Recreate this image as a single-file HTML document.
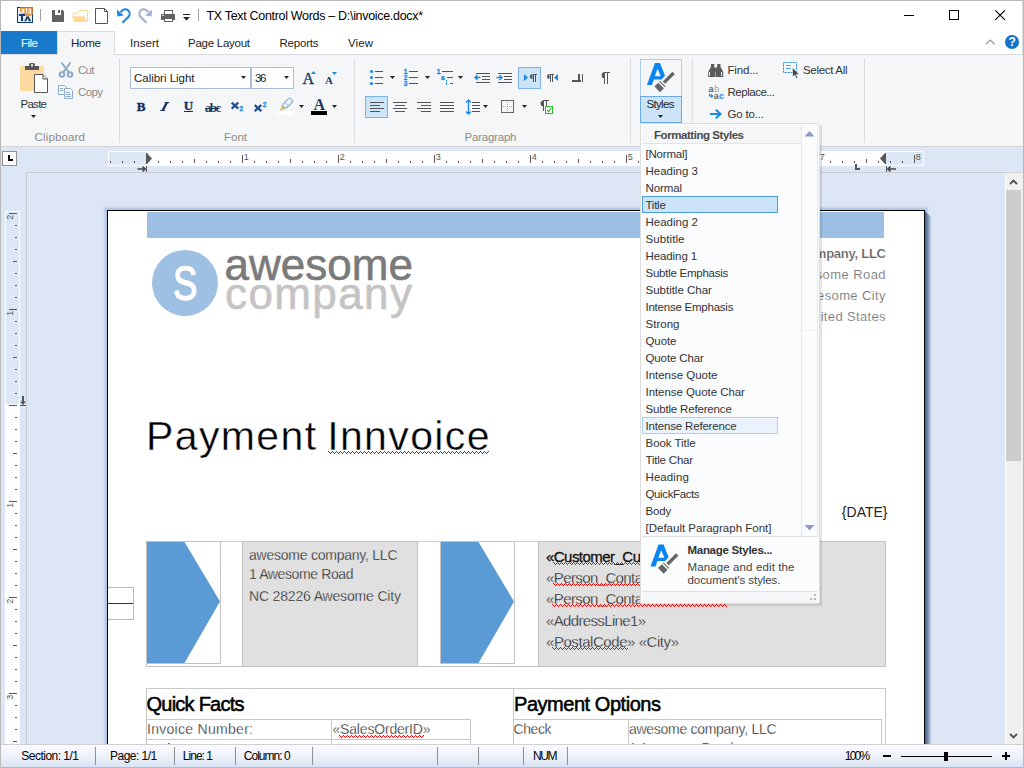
<!DOCTYPE html>
<html><head><meta charset="utf-8"><title>TX Text Control Words</title>
<style>
*{box-sizing:border-box;margin:0;padding:0}
html,body{width:1024px;height:768px;overflow:hidden;background:#fff}
body{font-family:"Liberation Sans",sans-serif;font-size:12px;color:#333;position:relative}
.a{position:absolute}
.t{position:absolute;white-space:nowrap}
svg{position:absolute;left:0;top:0;overflow:visible}
#win{position:absolute;left:0;top:0;width:1024px;height:768px;border:1px solid #b9b9b9;overflow:hidden;box-shadow:inset -1px 0 0 #dcdcdc}
#root{position:absolute;left:-1px;top:-1px;width:1024px;height:768px}
#ribbon{left:1px;top:54px;width:1022px;height:93px;background:#f5f6f7;border-top:1px solid #dadbdc;border-bottom:1px solid #d4d5d6}
#rulerbar{left:1px;top:147px;width:1022px;height:25px;background:#dce6f4}
#docarea{left:1px;top:172px;width:1004px;height:572px;background:#dce6f4;overflow:hidden}
#status{left:1px;top:744px;width:1022px;height:23px;background:linear-gradient(#fafbfd,#eef2f9 50%,#d9e3f3);border-top:1px solid #cfcfcf}
.sep{position:absolute;width:1px;background:#dcdddf}
.ssep{position:absolute;top:747px;width:1px;height:18px;background:#8f8f8f}
.cx{shape-rendering:crispEdges}

</style></head><body>
<div id="win"><div id="root">
<!-- title bar -->
<svg width="1024" height="60" viewBox="0 0 1024 60">
<!-- app icon -->
<rect x="17.500" y="7.500" width="15" height="15" fill="#e9eff8" stroke="#0f3c6e"/>
<path d="M24.300 21.200l2.600-5.500h1.400l2.900 5.500h-2.300l-1.400-3l-1.300 3z" fill="#0f3c6e"/>
<path d="M20 7h13v6.800q-1.500 2.600-5.200 3q-2.600-.5-4.300-2.200q-2.500-1-3.500-3.600z" fill="#eb9a40"/>
<path d="M20 7.500h12.500v6" fill="none" stroke="#b9742c"/>
<path class="cx" d="M19 14h6v2h-2v5h-2v-5h-2z" fill="#0f3c6e"/>
<g stroke="#fff" stroke-width="1.100" fill="none"><path d="M21.800 9l2.400 4M24.200 9l-2.400 4"/><path d="M25.600 10l1-.9v4"/><path d="M28.400 9.300h2v1.700h-1.300h1.300v1.900h-2.100"/></g>
<!-- separators -->
<rect class="cx" x="40" y="9" width="1" height="12" fill="#a0a0a0"/>
<rect class="cx" x="198" y="9" width="1" height="12" fill="#a0a0a0"/>
<!-- save -->
<path class="cx" d="M52 10h10l2 2v10h-12z" fill="#616161"/>
<rect class="cx" x="55" y="10" width="6" height="5" fill="#fff"/>
<rect class="cx" x="58" y="10" width="2" height="3" fill="#616161"/>
<!-- folder -->
<path d="M73.5 20v-7h4.5l2-2.5h7.5v10.5" fill="#fff" stroke="#ffd993" stroke-width="1.2"/>
<path d="M72.200 16.200h12l3.300 5.700h-13.300z" fill="#ffd993"/>
<!-- new doc -->
<path d="M95.5 8.5h9l3 3v12h-12z" fill="#fff" stroke="#555"/>
<path d="M104.5 8.5v3h3" fill="none" stroke="#555"/>
<!-- undo -->
<path d="M122.500 22.800l6-6a4.400 4.400 0 0 0-6.500-6l-1.500 1.600" fill="none" stroke="#1e88e5" stroke-width="2.1"/>
<path d="M116.800 9.600l.6 6.800l6.400-1z" fill="#1e88e5"/>
<!-- redo -->
<path d="M146.500 22.800l-6-6a4.400 4.400 0 0 1 6.500-6l1.500 1.600" fill="none" stroke="#9db3d0" stroke-width="2.1"/>
<path d="M152.200 9.600l-.6 6.800l-6.400-1z" fill="#9db3d0"/>
<!-- print -->
<rect class="cx" x="161" y="14" width="14" height="6" fill="#616161"/>
<rect class="cx" x="164.5" y="10.5" width="8" height="4" fill="#fff" stroke="#616161"/>
<rect class="cx" x="164.5" y="18.5" width="8" height="3" fill="#fff" stroke="#616161"/>
<rect class="cx" x="162" y="15" width="2" height="1" fill="#ddd"/>
<!-- qat dropdown -->
<rect class="cx" x="183" y="14" width="7" height="1" fill="#222"/>
<path d="M183 17h7l-3.5 3.5z" fill="#222"/>
<!-- window buttons -->
<rect class="cx" x="904" y="15" width="10" height="1" fill="#000"/>
<rect class="cx" x="949.5" y="10.5" width="9" height="9" fill="none" stroke="#000"/>
<path d="M995.3 10.3l9.6 9.6M1004.9 10.3l-9.6 9.6" stroke="#000" stroke-width="1.1" fill="none"/>
<!-- collapse + help -->
<path d="M986 44.3l4.3-4.2l4.3 4.2" stroke="#9a9a9a" stroke-width="1.3" fill="none"/>
<circle cx="1012" cy="42" r="7" fill="#1271c9"/>
<text x="1008.6" y="46.3" font-family="Liberation Sans" font-weight="bold" font-size="12" fill="#fff">?</text>
</svg>
<div class="t" style="top:10px;font-size:12.5px;line-height:12.5px;color:#000;left:206.5px;letter-spacing:-0.315px;">TX Text Control Words – D:\invoice.docx*</div>
<div class="a" style="left:1px;top:31px;width:56px;height:23px;background:#1979ca"></div>
<div class="t" style="top:38px;font-size:11.5px;line-height:11.5px;color:#fff;left:21px;letter-spacing:-0.510px;">File</div>
<div class="a" id="ribbon"></div>
<div class="a" style="left:57px;top:31px;width:58px;height:24px;background:#f5f6f7;border:1px solid #dadbdc;border-bottom:none"></div>
<div class="t" style="top:38px;font-size:11.5px;line-height:11.5px;color:#222;left:71px;letter-spacing:-0.229px;">Home</div>
<div class="t" style="top:38px;font-size:11.5px;line-height:11.5px;color:#222;left:130px;letter-spacing:0.047px;">Insert</div>
<div class="t" style="top:38px;font-size:11.5px;line-height:11.5px;color:#222;left:188px;letter-spacing:-0.259px;">Page Layout</div>
<div class="t" style="top:38px;font-size:11.5px;line-height:11.5px;color:#222;left:279.5px;letter-spacing:-0.214px;">Reports</div>
<div class="t" style="top:38px;font-size:11.5px;line-height:11.5px;color:#222;left:348px;letter-spacing:0.094px;">View</div>
<div class="sep" style="left:119px;top:58px;height:85px"></div>
<div class="sep" style="left:354px;top:58px;height:85px"></div>
<div class="sep" style="left:630px;top:58px;height:85px"></div>
<div class="sep" style="left:692px;top:58px;height:85px"></div>
<div class="sep" style="left:864px;top:58px;height:85px"></div>
<div class="t" style="top:132px;font-size:11.5px;line-height:11.5px;color:#8c8c8c;left:34.5px;letter-spacing:0.158px;">Clipboard</div>
<div class="t" style="top:132px;font-size:11.5px;line-height:11.5px;color:#8c8c8c;left:224px;letter-spacing:-0.005px;">Font</div>
<div class="t" style="top:132px;font-size:11.5px;line-height:11.5px;color:#8c8c8c;left:464.5px;letter-spacing:-0.215px;">Paragraph</div>
<div class="t" style="top:99px;font-size:11.5px;line-height:11.5px;color:#333;left:20.5px;letter-spacing:-0.730px;">Paste</div>
<div class="t" style="top:65px;font-size:11.5px;line-height:11.5px;color:#8c8c8c;left:78px;letter-spacing:-0.703px;">Cut</div>
<div class="t" style="top:87px;font-size:11.5px;line-height:11.5px;color:#8c8c8c;left:78px;letter-spacing:-0.620px;">Copy</div>
<div class="a" style="left:130px;top:67px;width:121px;height:22px;background:#fff;border:1px solid #abbdd8"></div>
<div class="a" style="left:251px;top:67px;width:43px;height:22px;background:#fff;border:1px solid #abbdd8"></div>
<div class="t" style="top:73px;font-size:11.5px;line-height:11.5px;color:#222;left:134px;letter-spacing:-0.020px;">Calibri Light</div>
<div class="t" style="top:73px;font-size:11.5px;line-height:11.5px;color:#222;left:255px;letter-spacing:-1.297px;">36</div>
<div class="t" style="top:100px;font-size:13px;line-height:13px;color:#14305a;left:136.8px;font-weight:bold;font-family:'Liberation Serif',serif;-webkit-text-stroke:.45px #14305a;">B</div>
<svg width="1024" height="150" viewBox="0 0 1024 150"><path d="M160.300 110.400h4.600M164.600 102.600h4.600" stroke="#14305a" stroke-width="1" fill="none"/><path d="M162.700 110.600l4.200-8.200" stroke="#14305a" stroke-width="2.300" fill="none"/></svg>
<div class="t" style="top:99px;font-size:13px;line-height:13px;color:#14305a;left:183.8px;font-weight:bold;font-family:'Liberation Serif',serif;-webkit-text-stroke:.3px #14305a;">U</div>
<div class="a" style="left:184px;top:111px;width:9px;height:1px;background:#14305a"></div>
<div class="t" style="top:101px;font-size:13px;line-height:13px;color:#1e3a5f;left:205px;font-weight:bold;font-family:'Liberation Serif',serif;letter-spacing:-1.650px;text-decoration:line-through;text-decoration-thickness:1px;">abc</div>
<div class="t" style="top:71px;font-size:16px;line-height:16px;color:#1e3a5f;left:302.4px;font-family:'Liberation Serif',serif;-webkit-text-stroke:.35px #1e3a5f;">A</div>
<div class="t" style="top:75px;font-size:11px;line-height:11px;color:#1e3a5f;left:325px;font-weight:bold;font-family:'Liberation Serif',serif;">A</div>
<div class="t" style="top:97px;font-size:16px;line-height:16px;color:#1e3a5f;left:313.5px;font-weight:bold;font-family:'Liberation Serif',serif;">A</div>
<div class="a" style="left:518px;top:67px;width:23px;height:22px;background:#cce4f7;border:1px solid #7db3ea"></div>
<div class="a" style="left:365px;top:96px;width:23px;height:22px;background:#cce4f7;border:1px solid #7db3ea"></div>
<div class="a" style="left:640px;top:59px;width:42px;height:38px;border:1px solid #a9cdf2;border-bottom:none"></div>
<div class="a" style="left:640px;top:96px;width:42px;height:27px;background:#cce4f7;border:1px solid #6ca9e8"></div>
<div class="t" style="top:99px;font-size:11.5px;line-height:11.5px;color:#222;left:646.5px;letter-spacing:-0.666px;">Styles</div>
<div class="t" style="top:65px;font-size:11.5px;line-height:11.5px;color:#333;left:727.5px;letter-spacing:-0.161px;">Find...</div>
<div class="t" style="top:87px;font-size:11.5px;line-height:11.5px;color:#333;left:727.5px;letter-spacing:-0.476px;">Replace...</div>
<div class="t" style="top:109px;font-size:11.5px;line-height:11.5px;color:#333;left:727.5px;letter-spacing:-0.174px;">Go to...</div>
<div class="t" style="top:65px;font-size:11.5px;line-height:11.5px;color:#333;left:803px;letter-spacing:-0.312px;">Select All</div>
<svg width="1024" height="150" viewBox="0 0 1024 150"><rect x="20" y="66" width="24" height="25" rx="1.200" fill="#fcd9a0"/><rect class="cx" x="25" y="66" width="14" height="4" fill="#595959"/><path d="M29 66v-1.500q0-1.500 1.500-1.500h3q1.500 0 1.500 1.500v1.500z" fill="#595959"/><rect x="31" y="64.300" width="2" height="2" fill="#f5f6f7"/><path d="M34.500 74.500h8.500l4.500 4.500v13.500h-13z" fill="#fff" stroke="#595959"/><path d="M43 74.500v4.500h4.500" fill="#e4e4e4" stroke="#595959"/><path d="M31 115h5l-2.5 3z" fill="#222"/><g stroke="#8fa9c8" fill="none" stroke-width="2"><path d="M61.500 62.500l7.500 10M70.500 62.500l-7.500 10"/><circle cx="62" cy="74.500" r="2.300"/><circle cx="70" cy="74.500" r="2.300"/></g><g stroke="#8fa9c8" fill="#f5f6f7"><path d="M58.500 85.500h6l2 2v7h-8z"/><path d="M64.500 88.500h6l2 2v8h-8z"/></g><rect class="cx" x="66" y="92" width="4" height="1" fill="#8fa9c8"/><rect class="cx" x="66" y="94" width="5" height="1" fill="#8fa9c8"/><rect class="cx" x="66" y="96" width="5" height="1" fill="#8fa9c8"/><rect class="cx" x="60" y="88" width="3" height="1" fill="#8fa9c8"/><rect class="cx" x="60" y="90" width="3" height="1" fill="#8fa9c8"/><path d="M241 76h5l-2.5 3z" fill="#222"/><path d="M284 76h5l-2.5 3z" fill="#222"/><path d="M311 74l2.500-3l2.500 3z" fill="#1e88e5"/><path d="M332 72h5l-2.500 3z" fill="#1e88e5"/><g stroke="#1e4f8f" stroke-width="2.300" fill="none"><path d="M231.700 102.600l6.600 6M238.300 102.600l-6.600 6"/><path d="M254.700 105l6.600 6.200M261.300 105l-6.600 6.200"/></g><text x="239.600" y="111" font-family="Liberation Sans" font-weight="bold" font-size="6.500" fill="#1e88e5" stroke="#1e88e5" stroke-width=".3">2</text><text x="262.700" y="106.500" font-family="Liberation Sans" font-weight="bold" font-size="6.500" fill="#1e88e5" stroke="#1e88e5" stroke-width=".3">2</text><g transform="translate(290.500 100.300) rotate(45)"><rect x="-2.600" y="-1.200" width="5.200" height="10.500" rx="1.600" fill="#eef3fb" stroke="#7f9fcc" stroke-width="1"/><path d="M-2.200 5.500h4.400" stroke="#7f9fcc" stroke-width=".8"/><path d="M-1.800 10h3.600l-.6 2.200l-1.200 2l-1.200-2z" fill="#e8c860" stroke="#b9a050" stroke-width=".4"/></g><rect class="cx" x="278" y="111" width="16" height="4" fill="#fff"/><path d="M299 105h5l-2.5 3z" fill="#222"/><rect class="cx" x="311" y="111" width="16" height="4" fill="#000"/><path d="M332 105h5l-2.5 3z" fill="#222"/><circle cx="371.500" cy="71.5" r="1.600" fill="#1e88e5"/><rect class="cx" x="375" y="71" width="8" height="1" fill="#555"/><circle cx="371.500" cy="77.5" r="1.600" fill="#1e88e5"/><rect class="cx" x="375" y="77" width="8" height="1" fill="#555"/><circle cx="371.500" cy="83.5" r="1.600" fill="#1e88e5"/><rect class="cx" x="375" y="83" width="8" height="1" fill="#555"/><path d="M390 76h5l-2.5 3z" fill="#222"/><text x="403.700" y="73.6" font-family="Liberation Sans" font-weight="bold" font-size="6.500" fill="#1e88e5" stroke="#1e88e5" stroke-width=".3">1</text><rect class="cx" x="409" y="71" width="9" height="1" fill="#555"/><text x="403.700" y="79.6" font-family="Liberation Sans" font-weight="bold" font-size="6.500" fill="#1e88e5" stroke="#1e88e5" stroke-width=".3">2</text><rect class="cx" x="409" y="77" width="9" height="1" fill="#555"/><text x="403.700" y="85.6" font-family="Liberation Sans" font-weight="bold" font-size="6.500" fill="#1e88e5" stroke="#1e88e5" stroke-width=".3">3</text><rect class="cx" x="409" y="83" width="9" height="1" fill="#555"/><path d="M425 76h5l-2.5 3z" fill="#222"/><text x="436.700" y="73.600" font-family="Liberation Sans" font-weight="bold" font-size="6.500" fill="#1e88e5" stroke="#1e88e5" stroke-width=".3">1</text><rect class="cx" x="442" y="71" width="11" height="1" fill="#555"/><text x="441" y="79.600" font-family="Liberation Sans" font-weight="bold" font-size="6.500" fill="#1e88e5" stroke="#1e88e5" stroke-width=".3">a</text><rect class="cx" x="447" y="77" width="6" height="1" fill="#555"/><rect class="cx" x="446" y="82" width="1" height="3" fill="#1e88e5"/><rect class="cx" x="446" y="80" width="1" height="1" fill="#1e88e5"/><rect class="cx" x="450" y="83" width="3" height="1" fill="#555"/><path d="M458 76h5l-2.5 3z" fill="#222"/><rect class="cx" x="476" y="73" width="14" height="1" fill="#555"/><rect class="cx" x="482" y="76" width="8" height="1" fill="#555"/><rect class="cx" x="482" y="79" width="8" height="1" fill="#555"/><rect class="cx" x="476" y="82" width="14" height="1" fill="#555"/><path d="M480.500 77.500h-5.500M477.500 75l-2.500 2.500l2.500 2.500" stroke="#1e88e5" stroke-width="1.400" fill="none"/><rect class="cx" x="498" y="73" width="14" height="1" fill="#555"/><rect class="cx" x="504" y="76" width="8" height="1" fill="#555"/><rect class="cx" x="504" y="79" width="8" height="1" fill="#555"/><rect class="cx" x="498" y="82" width="14" height="1" fill="#555"/><path d="M496.500 77.500h5.500M499.500 75l2.500 2.500l-2.500 2.500" stroke="#1e88e5" stroke-width="1.400" fill="none"/><path d="M524 74v7l4-3.500z" fill="#1e88e5"/><path d="M532.5 74a2.500 2.500 0 0 0 0 5z" fill="#555"/><rect class="cx" x="532.5" y="74" width="1" height="8" fill="#555"/><rect class="cx" x="534.5" y="74" width="1" height="8" fill="#555"/><rect class="cx" x="532.5" y="74" width="4.500" height="1" fill="#555"/><path d="M549.5 74a2.500 2.500 0 0 0 0 5z" fill="#555"/><rect class="cx" x="549.5" y="74" width="1" height="8" fill="#555"/><rect class="cx" x="551.5" y="74" width="1" height="8" fill="#555"/><rect class="cx" x="549.5" y="74" width="4.500" height="1" fill="#555"/><path d="M558 74v7l-4-3.500z" fill="#1e88e5"/><rect class="cx" x="572" y="80" width="9" height="2" fill="#555"/><rect class="cx" x="578" y="74" width="2" height="8" fill="#555"/><rect class="cx" x="582" y="74" width="1" height="8" fill="#555"/><path d="M605 72a3.300 3.300 0 0 0 0 6.600z" fill="#555"/><rect class="cx" x="604" y="72" width="1" height="12" fill="#555"/><rect class="cx" x="607" y="72" width="1" height="12" fill="#555"/><rect class="cx" x="604" y="72" width="6" height="1.200" fill="#555"/><rect class="cx" x="370" y="102" width="14" height="1" fill="#555"/><rect class="cx" x="370" y="105" width="10" height="1" fill="#555"/><rect class="cx" x="370" y="108" width="14" height="1" fill="#555"/><rect class="cx" x="370" y="111" width="10" height="1" fill="#555"/><rect class="cx" x="393" y="102" width="14" height="1" fill="#555"/><rect class="cx" x="395" y="105" width="10" height="1" fill="#555"/><rect class="cx" x="393" y="108" width="14" height="1" fill="#555"/><rect class="cx" x="395" y="111" width="10" height="1" fill="#555"/><rect class="cx" x="417" y="102" width="14" height="1" fill="#555"/><rect class="cx" x="421" y="105" width="10" height="1" fill="#555"/><rect class="cx" x="417" y="108" width="14" height="1" fill="#555"/><rect class="cx" x="421" y="111" width="10" height="1" fill="#555"/><rect class="cx" x="440" y="102" width="14" height="1" fill="#555"/><rect class="cx" x="440" y="105" width="14" height="1" fill="#555"/><rect class="cx" x="440" y="108" width="14" height="1" fill="#555"/><rect class="cx" x="440" y="111" width="14" height="1" fill="#555"/><rect class="cx" x="472" y="102" width="8" height="1" fill="#555"/><rect class="cx" x="472" y="105" width="8" height="1" fill="#555"/><rect class="cx" x="472" y="108" width="8" height="1" fill="#555"/><rect class="cx" x="472" y="111" width="8" height="1" fill="#555"/><path d="M468.500 100v14M466 102.500l2.500-2.500l2.500 2.500M466 111.500l2.500 2.500l2.500-2.500" stroke="#1e88e5" stroke-width="1.400" fill="none"/><path d="M483 105h5l-2.5 3z" fill="#222"/><rect x="501.500" y="100.500" width="12" height="12" fill="#f5f6f7" stroke="#666"/><path d="M507.500 102v10M503 106.500h10" stroke="#aaa" stroke-width="1" stroke-dasharray="1 1" fill="none"/><path d="M522 105h5l-2.5 3z" fill="#222"/><path d="M543.500 100.500a3 3 0 0 0 0 6z" fill="#555"/><rect class="cx" x="543" y="100" width="1" height="11" fill="#555"/><rect class="cx" x="546" y="100" width="1" height="6" fill="#555"/><rect class="cx" x="543" y="100" width="6" height="1.200" fill="#555"/><rect x="545.500" y="106.500" width="7" height="7" fill="#fff" stroke="#2eb82e"/><path d="M547 110l1.700 1.800l2.600-3.800" stroke="#2eb82e" stroke-width="1.200" fill="none"/><path d="M646.900 85L655 63h5l5 12.700l-3.500 3.900h-7.700l-1.900 5.400zM657.600 68.700l-2.800 7.500h5.950z" fill="#0a84f0" fill-rule="evenodd"/><g transform="translate(673.600 73) rotate(45)" fill="#666"><rect x="-1.700" y="0" width="3.400" height="13.600"/><rect x="-4" y="15.200" width="8" height="1.100"/><rect x="-4" y="17.700" width="8" height="5.400"/></g><path d="M658 115h5l-2.5 3z" fill="#222"/><g fill="#5a5a5a"><rect x="711" y="64" width="3.300" height="4"/><rect x="717.200" y="64" width="3.300" height="4"/><path d="M710.500 67.600h4.200l.8 3.400v6h-7.300v-5z"/><path d="M716.800 67.600h4.200l2.200 4.400v5h-7.300v-6z"/><rect x="714.500" y="67.600" width="2.500" height="4"/></g><rect class="cx" x="709" y="72" width="1" height="4" fill="#e8e8e8"/><rect class="cx" x="721" y="72" width="1" height="4" fill="#e8e8e8"/><text x="708.500" y="92" font-family="Liberation Sans" font-weight="bold" font-size="9" fill="#666">a</text><text x="714.200" y="92" font-family="Liberation Sans" font-size="9" fill="#9a9a9a">b</text><text x="713.800" y="98.500" font-family="Liberation Sans" font-weight="bold" font-size="9" fill="#666">a</text><text x="718.900" y="98.500" font-family="Liberation Sans" font-weight="bold" font-size="9" fill="#1e88e5">c</text><path d="M709.500 93.500v2.500h3M711 94.300l1.700 1.700l-1.700 1.700" stroke="#1e88e5" stroke-width="1.200" fill="none"/><path d="M710 114h10M715.800 109.800l4.700 4.200l-4.700 4.200" stroke="#1e88e5" stroke-width="2.100" fill="none"/><rect x="783.500" y="62.500" width="13" height="10" fill="none" stroke="#1e88e5" stroke-dasharray="2 1"/><rect class="cx" x="786" y="65" width="5" height="1" fill="#5aa6ec"/><rect class="cx" x="786" y="68" width="5" height="1" fill="#5aa6ec"/><path d="M792.500 67.500v9.500l2.200-2l1.600 3.500l1.500-.7l-1.600-3.400h3z" fill="#444" stroke="#f5f6f7" stroke-width=".6"/></svg>
<div class="a" id="rulerbar"></div>
<div class="a" style="left:2px;top:151px;width:15px;height:15px;background:#fff;border:1px solid #8f8f8f"></div>
<svg width="1024" height="175" viewBox="0 0 1024 175"><path class="cx" d="M8 155h2v4h3v2h-5z" fill="#000"/><rect class="cx" x="108" y="151" width="816" height="15" fill="#fff"/><rect class="cx" x="109" y="152" width="38" height="13" fill="#dce6f4"/><rect class="cx" x="886" y="152" width="37" height="13" fill="#dce6f4"/><rect class="cx" x="110" y="161" width="1" height="2" fill="#555"/><rect class="cx" x="122" y="161" width="1" height="2" fill="#555"/><rect class="cx" x="134" y="161" width="1" height="2" fill="#555"/><rect class="cx" x="158" y="161" width="1" height="2" fill="#555"/><rect class="cx" x="170" y="161" width="1" height="2" fill="#555"/><rect class="cx" x="182" y="161" width="1" height="2" fill="#555"/><rect class="cx" x="194" y="159" width="1" height="4" fill="#555"/><rect class="cx" x="206" y="161" width="1" height="2" fill="#555"/><rect class="cx" x="218" y="161" width="1" height="2" fill="#555"/><rect class="cx" x="230" y="161" width="1" height="2" fill="#555"/><rect class="cx" x="242" y="155" width="1" height="8" fill="#555"/><text x="243.8" y="159.600" font-family="Liberation Sans" font-size="9" fill="#555">1</text><rect class="cx" x="254" y="161" width="1" height="2" fill="#555"/><rect class="cx" x="266" y="161" width="1" height="2" fill="#555"/><rect class="cx" x="278" y="161" width="1" height="2" fill="#555"/><rect class="cx" x="290" y="159" width="1" height="4" fill="#555"/><rect class="cx" x="302" y="161" width="1" height="2" fill="#555"/><rect class="cx" x="314" y="161" width="1" height="2" fill="#555"/><rect class="cx" x="326" y="161" width="1" height="2" fill="#555"/><rect class="cx" x="338" y="155" width="1" height="8" fill="#555"/><text x="339.8" y="159.600" font-family="Liberation Sans" font-size="9" fill="#555">2</text><rect class="cx" x="350" y="161" width="1" height="2" fill="#555"/><rect class="cx" x="362" y="161" width="1" height="2" fill="#555"/><rect class="cx" x="374" y="161" width="1" height="2" fill="#555"/><rect class="cx" x="386" y="159" width="1" height="4" fill="#555"/><rect class="cx" x="398" y="161" width="1" height="2" fill="#555"/><rect class="cx" x="410" y="161" width="1" height="2" fill="#555"/><rect class="cx" x="422" y="161" width="1" height="2" fill="#555"/><rect class="cx" x="434" y="155" width="1" height="8" fill="#555"/><text x="435.8" y="159.600" font-family="Liberation Sans" font-size="9" fill="#555">3</text><rect class="cx" x="446" y="161" width="1" height="2" fill="#555"/><rect class="cx" x="458" y="161" width="1" height="2" fill="#555"/><rect class="cx" x="470" y="161" width="1" height="2" fill="#555"/><rect class="cx" x="482" y="159" width="1" height="4" fill="#555"/><rect class="cx" x="494" y="161" width="1" height="2" fill="#555"/><rect class="cx" x="506" y="161" width="1" height="2" fill="#555"/><rect class="cx" x="518" y="161" width="1" height="2" fill="#555"/><rect class="cx" x="530" y="155" width="1" height="8" fill="#555"/><text x="531.8" y="159.600" font-family="Liberation Sans" font-size="9" fill="#555">4</text><rect class="cx" x="542" y="161" width="1" height="2" fill="#555"/><rect class="cx" x="554" y="161" width="1" height="2" fill="#555"/><rect class="cx" x="566" y="161" width="1" height="2" fill="#555"/><rect class="cx" x="578" y="159" width="1" height="4" fill="#555"/><rect class="cx" x="590" y="161" width="1" height="2" fill="#555"/><rect class="cx" x="602" y="161" width="1" height="2" fill="#555"/><rect class="cx" x="614" y="161" width="1" height="2" fill="#555"/><rect class="cx" x="626" y="155" width="1" height="8" fill="#555"/><text x="627.8" y="159.600" font-family="Liberation Sans" font-size="9" fill="#555">5</text><rect class="cx" x="638" y="161" width="1" height="2" fill="#555"/><rect class="cx" x="650" y="161" width="1" height="2" fill="#555"/><rect class="cx" x="662" y="161" width="1" height="2" fill="#555"/><rect class="cx" x="674" y="159" width="1" height="4" fill="#555"/><rect class="cx" x="686" y="161" width="1" height="2" fill="#555"/><rect class="cx" x="698" y="161" width="1" height="2" fill="#555"/><rect class="cx" x="710" y="161" width="1" height="2" fill="#555"/><rect class="cx" x="722" y="155" width="1" height="8" fill="#555"/><text x="723.8" y="159.600" font-family="Liberation Sans" font-size="9" fill="#555">6</text><rect class="cx" x="734" y="161" width="1" height="2" fill="#555"/><rect class="cx" x="746" y="161" width="1" height="2" fill="#555"/><rect class="cx" x="758" y="161" width="1" height="2" fill="#555"/><rect class="cx" x="770" y="159" width="1" height="4" fill="#555"/><rect class="cx" x="782" y="161" width="1" height="2" fill="#555"/><rect class="cx" x="794" y="161" width="1" height="2" fill="#555"/><rect class="cx" x="806" y="161" width="1" height="2" fill="#555"/><rect class="cx" x="818" y="155" width="1" height="8" fill="#555"/><text x="819.8" y="159.600" font-family="Liberation Sans" font-size="9" fill="#555">7</text><rect class="cx" x="830" y="161" width="1" height="2" fill="#555"/><rect class="cx" x="842" y="161" width="1" height="2" fill="#555"/><rect class="cx" x="854" y="161" width="1" height="2" fill="#555"/><rect class="cx" x="866" y="159" width="1" height="4" fill="#555"/><rect class="cx" x="878" y="161" width="1" height="2" fill="#555"/><rect class="cx" x="890" y="161" width="1" height="2" fill="#555"/><rect class="cx" x="902" y="161" width="1" height="2" fill="#555"/><rect class="cx" x="914" y="155" width="1" height="8" fill="#555"/><text x="915.8" y="159.600" font-family="Liberation Sans" font-size="9" fill="#555">8</text><path d="M146 153h1l5 5.500l-5 5.500h-1z" fill="#555"/><path d="M147 153.500l4.300 4.700" stroke="#999" stroke-width=".8" fill="none"/><path d="M137.500 169h8M142.500 166.500l2.700 2.500l-2.700 2.500" stroke="#444" stroke-width="1.600" fill="none"/><rect class="cx" x="146" y="166" width="1" height="6" fill="#555"/><path d="M886 153h-1l-5 5.500l5 5.500h1z" fill="#555"/><path d="M896 169h-8M890.500 166.500l-2.700 2.500l2.700 2.500" stroke="#444" stroke-width="1.600" fill="none"/><rect class="cx" x="886" y="166" width="1" height="6" fill="#555"/><path class="cx" d="M855 164h2v4h3v2h-5z" fill="#555"/></svg>
<div class="a" id="docarea"></div>
<div class="a" style="left:1px;top:172px;width:1004px;height:572px;overflow:hidden"><div class="a" style="left:-1px;top:-172px;width:1024px;height:768px">
<div class="a" style="left:26px;top:172px;width:979px;height:1px;background:#c9cdd3"></div>
<div class="a" style="left:26px;top:172px;width:1px;height:572px;background:#c9cdd3"></div>
<svg width="30" height="768" viewBox="0 0 30 768"><rect class="cx" x="5" y="211" width="15" height="540" fill="#fff"/><rect class="cx" x="6" y="212" width="13" height="192" fill="#dce6f4"/><rect class="cx" x="9" y="213" width="8" height="1" fill="#555"/><text transform="translate(13.200 214.8) rotate(-90)" text-anchor="end" font-family="Liberation Sans" font-size="9" fill="#555">2</text><rect class="cx" x="15" y="225" width="2" height="1" fill="#555"/><rect class="cx" x="15" y="237" width="2" height="1" fill="#555"/><rect class="cx" x="15" y="249" width="2" height="1" fill="#555"/><rect class="cx" x="13" y="261" width="4" height="1" fill="#555"/><rect class="cx" x="15" y="273" width="2" height="1" fill="#555"/><rect class="cx" x="15" y="285" width="2" height="1" fill="#555"/><rect class="cx" x="15" y="297" width="2" height="1" fill="#555"/><rect class="cx" x="9" y="309" width="8" height="1" fill="#555"/><text transform="translate(13.200 310.8) rotate(-90)" text-anchor="end" font-family="Liberation Sans" font-size="9" fill="#555">1</text><rect class="cx" x="15" y="321" width="2" height="1" fill="#555"/><rect class="cx" x="15" y="333" width="2" height="1" fill="#555"/><rect class="cx" x="15" y="345" width="2" height="1" fill="#555"/><rect class="cx" x="13" y="357" width="4" height="1" fill="#555"/><rect class="cx" x="15" y="369" width="2" height="1" fill="#555"/><rect class="cx" x="15" y="381" width="2" height="1" fill="#555"/><rect class="cx" x="15" y="393" width="2" height="1" fill="#555"/><rect class="cx" x="15" y="417" width="2" height="1" fill="#555"/><rect class="cx" x="15" y="429" width="2" height="1" fill="#555"/><rect class="cx" x="15" y="441" width="2" height="1" fill="#555"/><rect class="cx" x="13" y="453" width="4" height="1" fill="#555"/><rect class="cx" x="15" y="465" width="2" height="1" fill="#555"/><rect class="cx" x="15" y="477" width="2" height="1" fill="#555"/><rect class="cx" x="15" y="489" width="2" height="1" fill="#555"/><rect class="cx" x="9" y="501" width="8" height="1" fill="#555"/><text transform="translate(13.200 502.8) rotate(-90)" text-anchor="end" font-family="Liberation Sans" font-size="9" fill="#555">1</text><rect class="cx" x="15" y="513" width="2" height="1" fill="#555"/><rect class="cx" x="15" y="525" width="2" height="1" fill="#555"/><rect class="cx" x="15" y="537" width="2" height="1" fill="#555"/><rect class="cx" x="13" y="549" width="4" height="1" fill="#555"/><rect class="cx" x="15" y="561" width="2" height="1" fill="#555"/><rect class="cx" x="15" y="573" width="2" height="1" fill="#555"/><rect class="cx" x="15" y="585" width="2" height="1" fill="#555"/><rect class="cx" x="9" y="597" width="8" height="1" fill="#555"/><text transform="translate(13.200 598.8) rotate(-90)" text-anchor="end" font-family="Liberation Sans" font-size="9" fill="#555">2</text><rect class="cx" x="15" y="609" width="2" height="1" fill="#555"/><rect class="cx" x="15" y="621" width="2" height="1" fill="#555"/><rect class="cx" x="15" y="633" width="2" height="1" fill="#555"/><rect class="cx" x="13" y="645" width="4" height="1" fill="#555"/><rect class="cx" x="15" y="657" width="2" height="1" fill="#555"/><rect class="cx" x="15" y="669" width="2" height="1" fill="#555"/><rect class="cx" x="15" y="681" width="2" height="1" fill="#555"/><rect class="cx" x="9" y="693" width="8" height="1" fill="#555"/><text transform="translate(13.200 694.8) rotate(-90)" text-anchor="end" font-family="Liberation Sans" font-size="9" fill="#555">3</text><rect class="cx" x="15" y="705" width="2" height="1" fill="#555"/><rect class="cx" x="15" y="717" width="2" height="1" fill="#555"/><rect class="cx" x="15" y="729" width="2" height="1" fill="#555"/><rect class="cx" x="13" y="741" width="4" height="1" fill="#555"/><rect class="cx" x="15" y="753" width="2" height="1" fill="#555"/><rect class="cx" x="9" y="405" width="8" height="1" fill="#555"/><rect class="cx" x="22" y="396" width="2" height="8" fill="#555"/><path d="M20 401.500h6l-3 3.500z" fill="#555"/><rect class="cx" x="20" y="405" width="6" height="1" fill="#555"/></svg>
<div class="a" style="left:107px;top:210px;width:818px;height:600px;background:#fff;border:1px solid #000;box-shadow:0 0 0 1px #afc4e2,0 0 0 2px #b8cbe5,0 0 0 3px #c7d6eb,0 0 0 4px #d5e0f0"></div>
<div class="a" style="left:925px;top:211px;width:7px;height:600px;background:linear-gradient(to right,#4a6488,#7088aa 40%,rgba(150,170,200,.55) 75%,rgba(200,212,232,0));clip-path:polygon(0 0,100% 7px,100% 100%,0 100%)"></div>
<div class="a" style="left:146.600px;top:212px;width:737.600px;height:26px;background:#9dbfe3"></div>
<div class="a" style="left:152px;top:250px;width:66px;height:66px;border-radius:50%;background:#9dc0e3"></div>
<div class="t" style="top:260px;font-size:48px;line-height:48px;color:#fff;left:173.3px;transform:scaleX(.76);transform-origin:0 0;-webkit-text-stroke:1.4px #fff;">S</div>
<div class="t" style="top:243px;font-size:44px;line-height:44px;color:#7a7a7a;left:224.5px;letter-spacing:0.031px;-webkit-text-stroke:.6px #7a7a7a;">awesome</div>
<div class="t" style="top:272px;font-size:44px;line-height:44px;color:#c4c4c4;left:225px;letter-spacing:1.409px;-webkit-text-stroke:.6px #c4c4c4;">company</div>
<div class="t" style="top:247px;font-size:13px;line-height:13px;color:#606060;right:138.254px;font-weight:bold;letter-spacing:-0.254px;-webkit-text-stroke:.2px #fff;">awesome company, LLC</div>
<div class="t" style="top:268px;font-size:13px;line-height:13px;color:#767676;right:138.085px;letter-spacing:0.415px;-webkit-text-stroke:.12px #fff;">1 Awesome Road</div>
<div class="t" style="top:289px;font-size:13px;line-height:13px;color:#767676;right:138.118px;letter-spacing:0.382px;-webkit-text-stroke:.12px #fff;">NC 28226 Awesome City</div>
<div class="t" style="top:310px;font-size:13px;line-height:13px;color:#767676;right:138.155px;letter-spacing:0.345px;-webkit-text-stroke:.12px #fff;">United States</div>
<div class="t" style="top:416px;font-size:41px;line-height:41px;color:#000;left:146px;letter-spacing:1.373px;-webkit-text-stroke:.4px #fff;word-spacing:-3px;">Payment Innvoice</div>
<div class="t" style="top:505px;font-size:14px;line-height:14px;color:#222;right:136.500px;">{DATE}</div>
<svg width="0" height="0"><defs><pattern id="sq" width="4" height="3" patternUnits="userSpaceOnUse"><rect x="0" y="0" width="1" height="1" fill="#f00"/><rect x="1" y="1" width="1" height="1" fill="#f00"/><rect x="2" y="2" width="1" height="1" fill="#f00"/><rect x="3" y="1" width="1" height="1" fill="#f00"/></pattern></defs></svg>
<svg width="1024" height="768" viewBox="0 0 1024 768"><rect class="cx" transform="translate(328 451)" x="0" y="0" width="161" height="3" fill="url(#sq)"/></svg>
<div class="a" style="left:108px;top:587px;width:26px;height:17px;border:1px solid #b8b8b8;border-left:none;border-bottom:none"></div>
<div class="a" style="left:108px;top:604px;width:26px;height:16px;border:1px solid #b8b8b8;border-left:none;border-top:none"></div>
<div class="a" style="left:108px;top:603px;width:25px;height:1px;background:#333"></div>
<div class="a" style="left:146px;top:541px;width:740px;height:126px;border:1px solid #c3c3c3;border-right:none;border-top-color:#d0d0d0"></div>
<div class="a" style="left:146px;top:541px;width:75px;height:123px;border:1px solid #c3c3c3;background:#fff"></div>
<div class="a" style="left:242px;top:541px;width:176px;height:126px;border:1px solid #c3c3c3;background:#e0e0e0"></div>
<div class="a" style="left:440px;top:541px;width:75px;height:123px;border:1px solid #c3c3c3;background:#fff"></div>
<div class="a" style="left:538px;top:541px;width:348px;height:126px;border:1px solid #c3c3c3;background:#e0e0e0"></div>
<svg width="1024" height="768" viewBox="0 0 1024 768"><path d="M147 542h37.500l35.500 59.500l-35.500 61.500h-37.500z" fill="#5b9bd5"/><path d="M441 542h37.500l35.500 59.500l-35.500 61.500h-37.500z" fill="#5b9bd5"/></svg>
<div class="t" style="top:548px;font-size:14px;line-height:14px;color:#151515;left:249px;letter-spacing:-0.239px;-webkit-text-stroke:.3px #e0e0e0;">awesome company, LLC</div>
<div class="t" style="top:567px;font-size:14px;line-height:14px;color:#151515;left:249px;letter-spacing:-0.383px;-webkit-text-stroke:.3px #e0e0e0;">1 Awesome Road</div>
<div class="t" style="top:589px;font-size:14px;line-height:14px;color:#151515;left:249px;letter-spacing:-0.169px;-webkit-text-stroke:.3px #e0e0e0;">NC 28226 Awesome City</div>
<div class="t" style="top:549px;font-size:15px;line-height:15px;color:#111;left:546px;letter-spacing:-0.536px;-webkit-text-stroke:.3px #111;">«Customer_Cu</div>
<div class="t" style="top:570px;font-size:15px;line-height:15px;color:#151515;left:546px;letter-spacing:-0.604px;-webkit-text-stroke:.3px #e0e0e0;">«Person_Conta</div>
<div class="t" style="top:591px;font-size:15px;line-height:15px;color:#151515;left:546px;letter-spacing:-0.604px;-webkit-text-stroke:.3px #e0e0e0;">«Person_Conta</div>
<div class="t" style="top:613px;font-size:15px;line-height:15px;color:#151515;left:546px;letter-spacing:-0.648px;-webkit-text-stroke:.3px #e0e0e0;">«AddressLine1»</div>
<div class="t" style="top:634px;font-size:15px;line-height:15px;color:#151515;left:546px;letter-spacing:-0.440px;-webkit-text-stroke:.3px #e0e0e0;">«PostalCode» «City»</div>
<svg width="1024" height="768" viewBox="0 0 1024 768"><rect class="cx" transform="translate(553 562)" x="0" y="0" width="107" height="3" fill="url(#sq)"/></svg>
<svg width="1024" height="768" viewBox="0 0 1024 768"><rect class="cx" transform="translate(553 583)" x="0" y="0" width="147" height="3" fill="url(#sq)"/></svg>
<svg width="1024" height="768" viewBox="0 0 1024 768"><rect class="cx" transform="translate(552 604)" x="0" y="0" width="175" height="3" fill="url(#sq)"/></svg>
<svg width="1024" height="768" viewBox="0 0 1024 768"><rect class="cx" transform="translate(552 647)" x="0" y="0" width="76" height="3" fill="url(#sq)"/></svg>
<div class="a" style="left:146px;top:688px;width:740px;height:80px;border:1px solid #c8c8c8"></div>
<div class="a" style="left:513px;top:688px;width:1px;height:80px;background:#c8c8c8"></div>
<div class="a" style="left:146px;top:719px;width:325px;height:60px;border:1px solid #c8c8c8"></div>
<div class="a" style="left:146px;top:739px;width:325px;height:1px;background:#c8c8c8"></div>
<div class="a" style="left:331px;top:719px;width:1px;height:60px;background:#c8c8c8"></div>
<div class="a" style="left:513px;top:719px;width:369px;height:60px;border:1px solid #c8c8c8"></div>
<div class="a" style="left:628px;top:719px;width:1px;height:60px;background:#c8c8c8"></div>
<div class="t" style="top:694px;font-size:20px;line-height:20px;color:#000;left:146.5px;letter-spacing:-0.758px;-webkit-text-stroke:.55px #000;">Quick Facts</div>
<div class="t" style="top:694px;font-size:20px;line-height:20px;color:#000;left:514px;letter-spacing:-0.459px;-webkit-text-stroke:.55px #000;">Payment Options</div>
<div class="t" style="top:722px;font-size:14px;line-height:14px;color:#151515;left:147px;letter-spacing:0.290px;-webkit-text-stroke:.3px #fff;">Invoice Number:</div>
<div class="t" style="top:722px;font-size:14px;line-height:14px;color:#151515;left:332.5px;letter-spacing:-0.184px;-webkit-text-stroke:.3px #fff;">«SalesOrderID»</div>
<div class="t" style="top:722px;font-size:14px;line-height:14px;color:#151515;left:513.5px;letter-spacing:-0.422px;-webkit-text-stroke:.3px #fff;">Check</div>
<div class="t" style="top:722px;font-size:14px;line-height:14px;color:#151515;left:629px;letter-spacing:-0.292px;-webkit-text-stroke:.3px #fff;">awesome company, LLC</div>
<div class="t" style="top:741px;font-size:14px;line-height:14px;color:#151515;left:629px;letter-spacing:-0.383px;-webkit-text-stroke:.3px #fff;">1 Awesome Road</div>
<div class="t" style="top:742px;font-size:14px;line-height:14px;color:#222;left:147px;">Order Date:</div>
<svg width="1024" height="768" viewBox="0 0 1024 768"><rect class="cx" transform="translate(339 735)" x="0" y="0" width="85" height="3" fill="url(#sq)"/></svg>
</div></div>
<div class="a" style="left:1005px;top:172px;width:18px;height:572px;background:#f0f0f0;border-left:1px solid #fff"></div>
<div class="a" style="left:1006px;top:190px;width:15px;height:271px;background:#cdcdcd"></div>
<svg width="1024" height="768" viewBox="0 0 1024 768"><path d="M1010 184l3.500-3.500l3.500 3.500M1010 734l3.500 3.500l3.500-3.500" stroke="#505050" stroke-width="1.800" fill="none"/></svg>
<div class="a" style="left:1005px;top:172px;width:18px;height:1px;background:#d4d4d4"></div>
<div class="a" id="status"></div>
<div class="ssep" style="left:95px"></div>
<div class="ssep" style="left:174px"></div>
<div class="ssep" style="left:235px"></div>
<div class="ssep" style="left:312px"></div>
<div class="ssep" style="left:437px"></div>
<div class="ssep" style="left:478px"></div>
<div class="ssep" style="left:523px"></div>
<div class="ssep" style="left:567px"></div>
<div class="t" style="top:750px;font-size:12px;line-height:12px;color:#000;left:21.3px;letter-spacing:-0.516px;">Section: 1/1</div>
<div class="t" style="top:750px;font-size:12px;line-height:12px;color:#000;left:110px;letter-spacing:-0.522px;">Page: 1/1</div>
<div class="t" style="top:750px;font-size:12px;line-height:12px;color:#000;left:182.8px;letter-spacing:-0.972px;">Line: 1</div>
<div class="t" style="top:750px;font-size:12px;line-height:12px;color:#000;left:243.8px;letter-spacing:-0.988px;">Column: 0</div>
<div class="t" style="top:750px;font-size:12px;line-height:12px;color:#000;left:533px;letter-spacing:-1.414px;">NUM</div>
<div class="t" style="top:750px;font-size:12px;line-height:12px;color:#000;left:844.8px;letter-spacing:-1.768px;">100%</div>
<svg width="1024" height="768" viewBox="0 0 1024 768"><rect class="cx" x="883" y="755" width="8" height="2" fill="#000"/><rect class="cx" x="901" y="756" width="91" height="1" fill="#000"/><rect class="cx" x="944" y="752" width="4" height="9" fill="#000"/><rect class="cx" x="1002" y="755" width="8" height="2" fill="#000"/><rect class="cx" x="1005" y="752" width="2" height="8" fill="#000"/></svg>
<div class="a" style="left:640px;top:123px;width:180px;height:481px;background:#fbfcfd;border:1px solid #dcdcdc;border-radius:2px;box-shadow:inset 0 0 0 1px #fff,2px 2px 1px rgba(0,0,0,.11)"></div>
<div class="a" style="left:642px;top:125px;width:159px;height:19px;background:#f5f6f7;border-bottom:1px solid #e2e3e4"></div>
<div class="t" style="top:130px;font-size:11.5px;line-height:11.5px;color:#4a4a4a;left:654px;font-weight:bold;letter-spacing:-0.446px;">Formatting Styles</div>
<div class="a" style="left:801px;top:125px;width:1px;height:411px;background:#e6e7e8"></div>
<div class="a" style="left:817px;top:125px;width:1px;height:411px;background:#e6e7e8"></div>
<div class="a" style="left:802px;top:330px;width:15px;height:1px;background:#eeeff1"></div>
<svg width="1024" height="768" viewBox="0 0 1024 768"><path d="M804.500 136.500h10l-5-5.500z" fill="#8f9bc6"/><path d="M804.500 525h10l-5 5.500z" fill="#8f9bc6"/></svg>
<div class="a" style="left:642px;top:196px;width:136px;height:17px;background:#cce4f7;border:1px solid #4f9be3"></div>
<div class="a" style="left:642px;top:417px;width:136px;height:17px;background:#eaf3fc;border:1px solid #a8cff5"></div>
<div class="t" style="top:149px;font-size:11.5px;line-height:11.5px;color:#333;left:645.5px;letter-spacing:-0.208px;">[Normal]</div>
<div class="t" style="top:166px;font-size:11.5px;line-height:11.5px;color:#333;left:645.5px;letter-spacing:0.008px;">Heading 3</div>
<div class="t" style="top:183px;font-size:11.5px;line-height:11.5px;color:#333;left:645.5px;letter-spacing:-0.113px;">Normal</div>
<div class="t" style="top:200px;font-size:11.5px;line-height:11.5px;color:#333;left:645.5px;letter-spacing:-0.253px;">Title</div>
<div class="t" style="top:217px;font-size:11.5px;line-height:11.5px;color:#333;left:645.5px;letter-spacing:0.008px;">Heading 2</div>
<div class="t" style="top:234px;font-size:11.5px;line-height:11.5px;color:#333;left:645.5px;letter-spacing:0.092px;">Subtitle</div>
<div class="t" style="top:251px;font-size:11.5px;line-height:11.5px;color:#333;left:645.5px;letter-spacing:-0.092px;">Heading 1</div>
<div class="t" style="top:268px;font-size:11.5px;line-height:11.5px;color:#333;left:645.5px;letter-spacing:-0.250px;">Subtle Emphasis</div>
<div class="t" style="top:285px;font-size:11.5px;line-height:11.5px;color:#333;left:645.5px;letter-spacing:-0.007px;">Subtitle Char</div>
<div class="t" style="top:302px;font-size:11.5px;line-height:11.5px;color:#333;left:645.5px;letter-spacing:-0.235px;">Intense Emphasis</div>
<div class="t" style="top:319px;font-size:11.5px;line-height:11.5px;color:#333;left:645.5px;letter-spacing:0.022px;">Strong</div>
<div class="t" style="top:336px;font-size:11.5px;line-height:11.5px;color:#333;left:645.5px;letter-spacing:-0.082px;">Quote</div>
<div class="t" style="top:353px;font-size:11.5px;line-height:11.5px;color:#333;left:645.5px;letter-spacing:-0.117px;">Quote Char</div>
<div class="t" style="top:370px;font-size:11.5px;line-height:11.5px;color:#333;left:645.5px;letter-spacing:-0.021px;">Intense Quote</div>
<div class="t" style="top:387px;font-size:11.5px;line-height:11.5px;color:#333;left:645.5px;letter-spacing:-0.057px;">Intense Quote Char</div>
<div class="t" style="top:404px;font-size:11.5px;line-height:11.5px;color:#333;left:645.5px;letter-spacing:-0.172px;">Subtle Reference</div>
<div class="t" style="top:421px;font-size:11.5px;line-height:11.5px;color:#333;left:645.5px;letter-spacing:-0.174px;">Intense Reference</div>
<div class="t" style="top:438px;font-size:11.5px;line-height:11.5px;color:#333;left:645.5px;letter-spacing:-0.033px;">Book Title</div>
<div class="t" style="top:455px;font-size:11.5px;line-height:11.5px;color:#333;left:645.5px;letter-spacing:-0.202px;">Title Char</div>
<div class="t" style="top:472px;font-size:11.5px;line-height:11.5px;color:#333;left:645.5px;letter-spacing:0.076px;">Heading</div>
<div class="t" style="top:489px;font-size:11.5px;line-height:11.5px;color:#333;left:645.5px;letter-spacing:-0.380px;">QuickFacts</div>
<div class="t" style="top:506px;font-size:11.5px;line-height:11.5px;color:#333;left:645.5px;letter-spacing:-0.140px;">Body</div>
<div class="t" style="top:523px;font-size:11.5px;line-height:11.5px;color:#333;left:645.5px;">[Default Paragraph Font]</div>
<div class="a" style="left:642px;top:536px;width:176px;height:1px;background:#dfe0e1"></div>
<div class="a" style="left:642px;top:591px;width:176px;height:1px;background:#dfe0e1"></div>
<div class="a" style="left:642px;top:592px;width:176px;height:11px;background:#f5f6f7"></div>
<div class="t" style="top:545px;font-size:11.5px;line-height:11.5px;color:#333;left:687.5px;font-weight:bold;letter-spacing:-0.299px;">Manage Styles...</div>
<div class="t" style="top:562px;font-size:11.5px;line-height:11.5px;color:#444;left:687.5px;letter-spacing:0.119px;">Manage and edit the</div>
<div class="t" style="top:575px;font-size:11.5px;line-height:11.5px;color:#444;left:687.5px;letter-spacing:-0.074px;">document's styles.</div>
<svg width="1024" height="768" viewBox="0 0 1024 768"><g transform="translate(3.600 481.500)"><path d="M646.900 85L655 63h5l5 12.700l-3.500 3.900h-7.700l-1.900 5.400zM657.600 68.700l-2.800 7.500h5.950z" fill="#0a84f0" fill-rule="evenodd"/><g transform="translate(673.600 73) rotate(45)" fill="#666"><rect x="-1.700" y="0" width="3.400" height="13.600"/><rect x="-4" y="15.200" width="8" height="1.100"/><rect x="-4" y="17.700" width="8" height="5.400"/></g></g><g fill="#b8b8b8"><rect x="814" y="594" width="2" height="2"/><rect x="814" y="598" width="2" height="2"/><rect x="810" y="598" width="2" height="2"/></g></svg>
</div></div>
</body></html>
